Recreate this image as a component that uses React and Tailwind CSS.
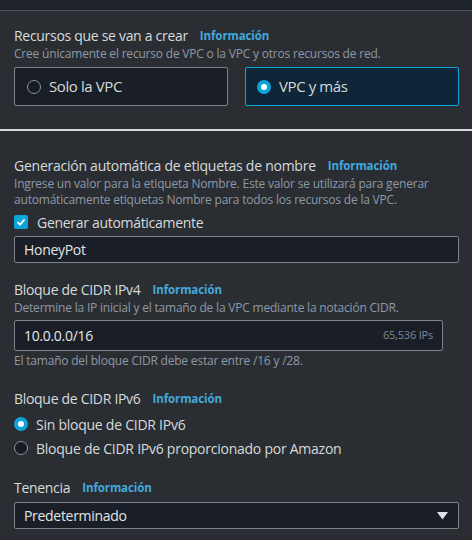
import React, { useState } from "react";

const font = { fontFamily: '"Open Sans", "Noto Sans", sans-serif' };

function Info() {
  return <span className="ml-[12px] text-[11.5px] font-bold tracking-[-0.1px] text-[#42a9dc]">Información</span>;
}

function Radio({ checked }) {
  return checked ? (
    <span className="grid h-[14px] w-[14px] shrink-0 place-items-center rounded-full bg-[#0aa4d8]">
      <span className="h-[6px] w-[6px] rounded-full bg-white" />
    </span>
  ) : (
    <span className="h-[14px] w-[14px] shrink-0 rounded-full border-[1.5px] border-[#8d949c] bg-[#161c25]" />
  );
}

export default function App() {
  const [scope, setScope] = useState("more");
  const [ipv6, setIpv6] = useState("none");
  const [auto, setAuto] = useState(true);

  return (
    <div style={font} className="min-h-[540px] w-full bg-[#2a2e33] text-[#d5dbdb]">
      <div className="h-[11px] border-b border-[#4f555e] bg-[#1e222a]" />

      <div className="px-[14px] pb-[23px] pr-[13px] pt-[15px]">
        <div className="flex items-center text-[14px] leading-[20px] tracking-[-0.3px]">
          Recursos que se van a crear
          <Info />
        </div>
        <p className="text-[12px] leading-[16px] tracking-[-0.2px] text-[#8e99a6]">
          Cree únicamente el recurso de VPC o la VPC y otros recursos de red.
        </p>
        <div className="mt-[5px] grid grid-cols-2 gap-[17px]">
          <button
            onClick={() => setScope("vpc")}
            className={`flex h-[39px] items-center gap-[8px] rounded-[2px] border px-[12px] text-[15px] tracking-[-0.4px] ${
              scope === "vpc" ? "border-[#0aa4d8] bg-[#0f2538]" : "border-[#7b828b] bg-[#1a1f27]"
            }`}
          >
            <Radio checked={scope === "vpc"} />
            Solo la VPC
          </button>
          <button
            onClick={() => setScope("more")}
            className={`flex h-[39px] items-center gap-[8px] rounded-[2px] border px-[11px] text-[15px] tracking-[-0.4px] ${
              scope === "more" ? "border-[#0aa4d8] bg-[#0f2538]" : "border-[#7b828b] bg-[#1a1f27]"
            }`}
          >
            <Radio checked={scope === "more"} />
            VPC y más
          </button>
        </div>
      </div>

      <div className="h-[2px] bg-[#d9dcdf]" />

      <div className="px-[14px] pr-[13px] pt-[25px]">
        <div className="flex items-center text-[14px] leading-[20px] tracking-[-0.25px]">
          Generación automática de etiquetas de nombre
          <Info />
        </div>
        <p className="text-[12px] leading-[16px] tracking-[-0.2px] text-[#8e99a6]">
          Ingrese un valor para la etiqueta Nombre. Este valor se utilizará para generar automáticamente etiquetas
          Nombre para todos los recursos de la VPC.
        </p>
        <label className="mt-[4px] flex h-[20px] items-center gap-[9px] text-[14px] tracking-[-0.3px]">
          <span
            onClick={() => setAuto(!auto)}
            className={`grid h-[14px] w-[14px] place-items-center rounded-[2px] ${auto ? "bg-[#0aa4d8]" : "border border-[#8d949c]"}`}
          >
            {auto && (
              <svg width="10" height="10" viewBox="0 0 10 10">
                <path d="M1.5 5.2 L4 7.6 L8.6 2.4" fill="none" stroke="white" strokeWidth="1.8" />
              </svg>
            )}
          </span>
          Generar automáticamente
        </label>
        <div className="mt-[4px] flex h-[27px] items-center rounded-[2px] border border-[#7b828b] bg-[#1a1f27] px-[9px] text-[14px] tracking-[-0.3px] text-[#e1e5e8]">
          HoneyPot
        </div>

        <div className="mt-[17px] flex items-center text-[14px] leading-[20px] tracking-[-0.3px]">
          Bloque de CIDR IPv4
          <Info />
        </div>
        <p className="text-[12px] leading-[16px] tracking-[-0.2px] text-[#8e99a6]">
          Determine la IP inicial y el tamaño de la VPC mediante la notación CIDR.
        </p>
        <div className="mt-[4px] flex h-[31px] w-[429px] items-center justify-between rounded-[2px] border border-[#7b828b] bg-[#1a1f27] px-[9px]">
          <span className="text-[14px] tracking-[-0.3px] text-[#e1e5e8]">10.0.0.0/16</span>
          <span className="text-[11px] tracking-[-0.2px] text-[#7d8894]">65,536 IPs</span>
        </div>
        <p className="mt-[2px] text-[12px] leading-[16px] tracking-[-0.2px] text-[#8e99a6]">
          El tamaño del bloque CIDR debe estar entre /16 y /28.
        </p>

        <div className="mt-[20px] flex items-center text-[14px] leading-[20px] tracking-[-0.3px]">
          Bloque de CIDR IPv6
          <Info />
        </div>
        <div className="mt-[5px] flex flex-col gap-[4px]">
          <label onClick={() => setIpv6("none")} className="flex h-[20px] items-center gap-[8px] text-[14px] tracking-[-0.25px]">
            <Radio checked={ipv6 === "none"} />
            Sin bloque de CIDR IPv6
          </label>
          <label onClick={() => setIpv6("amazon")} className="flex h-[20px] items-center gap-[8px] text-[14px] tracking-[-0.25px]">
            <Radio checked={ipv6 === "amazon"} />
            Bloque de CIDR IPv6 proporcionado por Amazon
          </label>
        </div>

        <div className="mt-[20px] flex items-center text-[14px] leading-[20px] tracking-[-0.3px]">
          Tenencia
          <Info />
        </div>
        <div className="mt-[4px] flex h-[27px] items-center justify-between rounded-[2px] border border-[#7b828b] bg-[#1a1f27] pl-[9px] pr-[10px] text-[14px] tracking-[-0.3px] text-[#e1e5e8]">
          Predeterminado
          <svg width="11" height="8" viewBox="0 0 11 8">
            <path d="M0 0 H11 L5.5 7.5 Z" fill="#dfe2e5" />
          </svg>
        </div>
      </div>
    </div>
  );
}
